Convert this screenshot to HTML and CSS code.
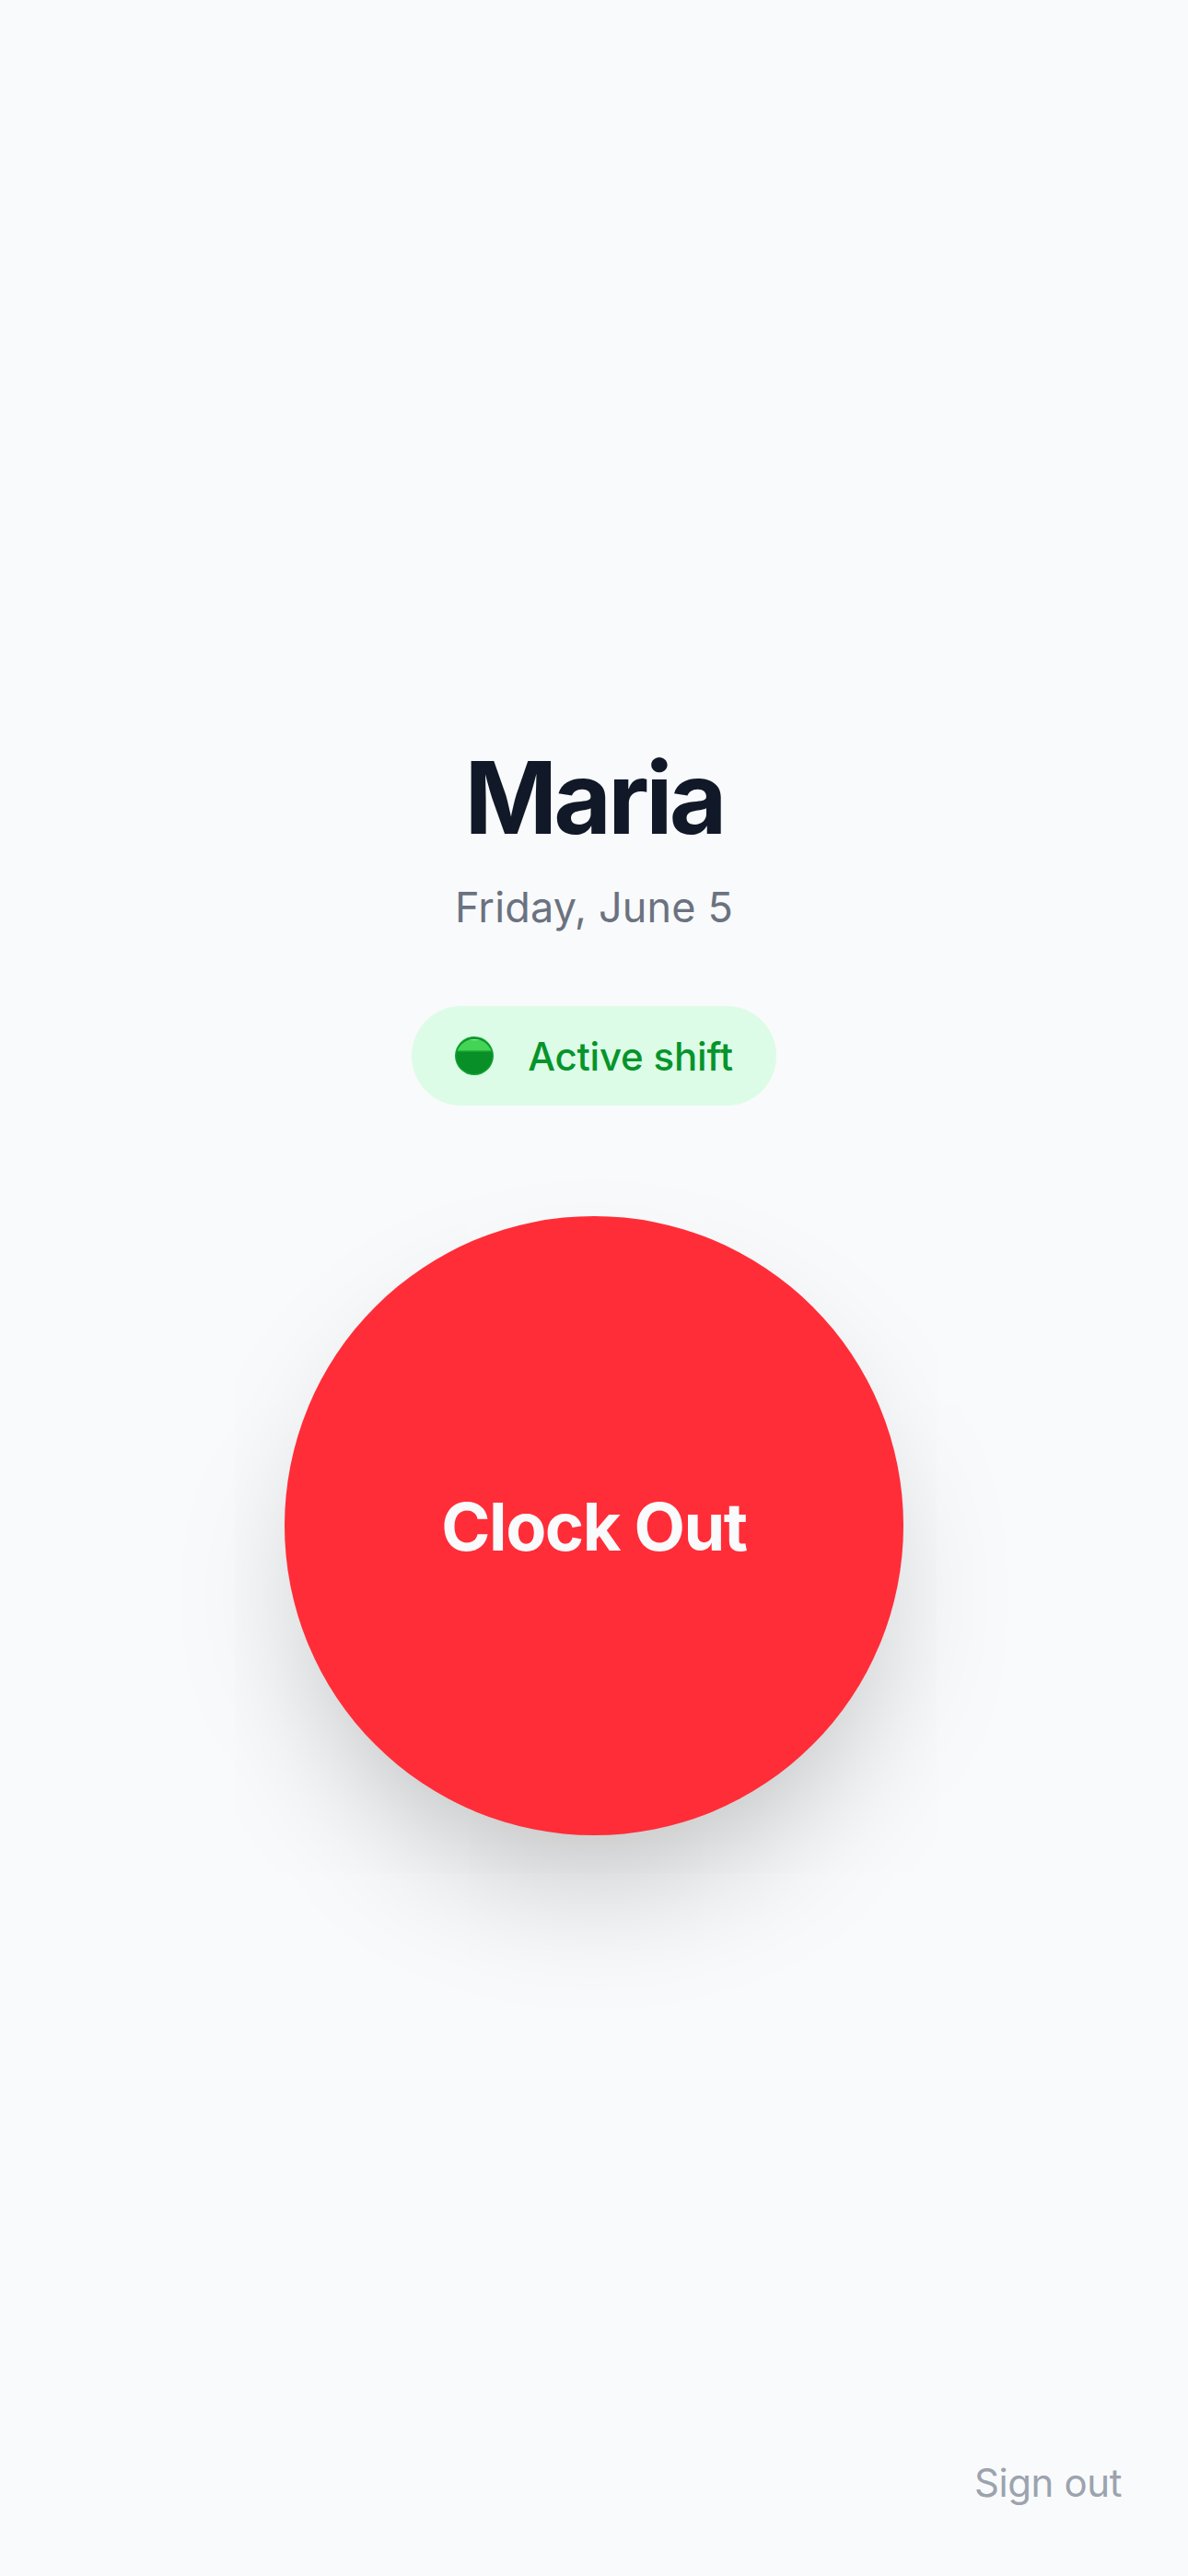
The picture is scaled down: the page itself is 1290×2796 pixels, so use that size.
FILE: index.html
```html
<!DOCTYPE html>
<html lang="en">
<head>
    <meta charset="UTF-8">
    <meta name="viewport" content="width=device-width, initial-scale=1.0">
    <title>Clock Out</title>
    <link rel="stylesheet" href="styles.css">
</head>
<body>
    <main class="screen">
        <div class="content">
            <h1 class="name">Maria</h1>
            <p class="date">Friday, June 5</p>

            <div class="status">
                <svg class="status-dot" viewBox="0 0 42 42" aria-hidden="true">
                    <circle cx="21" cy="21" r="21" fill="#12a233"/>
                    <circle cx="21" cy="21" r="19.6" fill="#088f27"/>
                    <path d="M2.6 15.5 A19.6 19.6 0 0 1 39.4 15.5 Z" fill="#44d455"/>
                    <path d="M2.4 15.5 H39.6 V16.5 H2.4 Z" fill="#26b23e"/>
                    <path d="M15 3.8 Q21 2.8 28 3.8 Q21 4.6 15 3.8 Z" fill="#a8e9b0"/>
                </svg>
                <span class="status-label">Active shift</span>
            </div>

            <button class="clock-button">Clock Out</button>
        </div>

        <footer class="footer">
            <a class="sign-out">Sign out</a>
        </footer>
    </main>
</body>
</html>
```

FILE: styles.css
```css
* {
    box-sizing: border-box;
}

html, body {
    margin: 0;
    padding: 0;
}

body {
    background: #f9fafb;
    font-family: Inter, "Liberation Sans", sans-serif;
}

.screen {
    display: flex;
    flex-direction: column;
    height: 2796px;
    overflow: hidden;
}

.content {
    flex: 1;
    display: flex;
    flex-direction: column;
    align-items: center;
    padding-top: 800px;
}

.name {
    margin: 0;
    font-size: 108px;
    line-height: 132px;
    font-weight: 700;
    letter-spacing: -3.8px;
    color: #111827;
}

.date {
    margin: 20px 0 0;
    font-size: 45px;
    line-height: 66px;
    font-weight: 400;
    letter-spacing: 0.15px;
    color: #6b7280;
}

.status {
    display: flex;
    align-items: center;
    gap: 37px;
    height: 108px;
    margin-top: 74px;
    padding: 0 47px;
    border-radius: 54px;
    background: #dcfce7;
}

.status-dot {
    width: 42px;
    height: 42px;
}

.status-label {
    font-size: 42px;
    font-weight: 500;
    letter-spacing: -0.2px;
    color: #06942b;
}

.clock-button {
    width: 672px;
    height: 672px;
    margin-top: 120px;
    border: none;
    border-radius: 50%;
    background: #ff2d38;
    color: #f9fafb;
    font-family: inherit;
    font-size: 72px;
    font-weight: 700;
    letter-spacing: -1.5px;
    box-shadow: 0 75px 150px -36px rgba(0, 0, 0, 0.25);
}

.footer {
    display: flex;
    justify-content: flex-end;
    padding: 0 72px 71px;
}

.sign-out {
    font-size: 42px;
    line-height: 60px;
    letter-spacing: -0.4px;
    color: #9ca3af;
}
```
